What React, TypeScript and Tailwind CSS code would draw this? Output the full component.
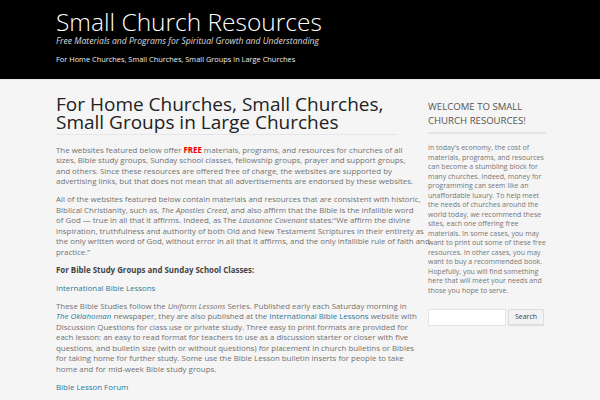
const link = 'text-[#2b7a9b]';

export default function App() {
  return (
    <div className="w-[600px] h-[400px] overflow-hidden bg-[#f5f5f5] font-['Open_Sans',sans-serif]">
      {/* Header */}
      <header className="h-[80px] bg-black border-b border-[#e8e8e8] pl-[56px] pt-[8px]">
        <h1 className="text-[24.5px] leading-[28px] font-light text-white">Small Church Resources</h1>
        <p className="text-[8.6px] leading-[10px] italic text-[#ddd]">
          Free Materials and Programs for Spiritual Growth and Understanding
        </p>
        <p className="mt-[8px] text-[7.4px] leading-[10px] text-[#eee]">
          For Home Churches, Small Churches, Small Groups in Large Churches
        </p>
      </header>

      <div className="flex gap-[30px] pl-[56px] pt-[15px]">
        {/* Main column */}
        <main className="w-[342px] shrink-0 text-[7.9px] leading-[10.5px] text-[#727272] whitespace-nowrap">
          <h2 className="text-[19px] leading-[18px] text-[#222] pb-[3px] border-b border-[#e6e6e6] whitespace-normal">
            For Home Churches, Small Churches, Small Groups in Large Churches
          </h2>
          <p className="mt-[9.5px]">
            The websites featured below offer <strong className="text-[#e00]">FREE</strong> materials, programs, and resources for churches of all
            <br />
            sizes, Bible study groups, Sunday school classes, fellowship groups, prayer and support groups,
            <br />
            and others. Since these resources are offered free of charge, the websites are supported by
            <br />
            advertising links, but that does not mean that all advertisements are endorsed by these websites.
          </p>
          <p className="mt-[7.5px]">
            All of the websites featured below contain materials and resources that are consistent with historic,
            <br />
            Biblical Christianity, such as, <em>The Apostles Creed</em>, and also affirm that the Bible is the infallible word
            <br />
            of God — true in all that it affirms. Indeed, as The <em>Lausanne Covenant</em> states:“We affirm the divine
            <br />
            inspiration, truthfulness and authority of both Old and New Testament Scriptures in their entirety as
            <br />
            the only written word of God, without error in all that it affirms, and the only infallible rule of faith and
            <br />
            practice.”
          </p>
          <p className="mt-[7.5px] font-bold text-[#444]">For Bible Study Groups and Sunday School Classes:</p>
          <p className="mt-[7.5px]">
            <a className={link}>International Bible Lessons</a>
          </p>
          <p className="mt-[7.5px]">
            These Bible Studies follow the <em>Uniform Lessons</em> Series. Published early each Saturday morning in
            <br />
            <em className={link}>The Oklahoman</em> newspaper, they are also published at the{' '}
            <a className={link}>International Bible Lessons</a> website with
            <br />
            Discussion Questions for class use or private study. Three easy to print formats are provided for
            <br />
            each lesson: an easy to read format for teachers to use as a discussion starter or closer with five
            <br />
            questions, and bulletin size (with or without questions) for placement in church bulletins or Bibles
            <br />
            for taking home for further study. Some use the Bible Lesson bulletin inserts for people to take
            <br />
            home and for mid-week Bible study groups.
          </p>
          <p className="mt-[7.5px]">
            <a className={link}>Bible Lesson Forum</a>
          </p>
        </main>

        {/* Sidebar */}
        <aside className="w-[118px] shrink-0 pt-[5px]">
          <h3 className="text-[9.6px] leading-[13.5px] uppercase text-[#555] pb-[5px] border-b-2 border-[#e4e4e4]">
            Welcome to Small Church Resources!
          </h3>
          <p className="mt-[9px] text-[7px] leading-[9.5px] text-[#777] whitespace-nowrap">
            In today's economy, the cost of
            <br />
            materials, programs, and resources
            <br />
            can become a stumbling block for
            <br />
            many churches. Indeed, money for
            <br />
            programming can seem like an
            <br />
            unaffordable luxury. To help meet
            <br />
            the needs of churches around the
            <br />
            world today, we recommend these
            <br />
            sites, each one offering free
            <br />
            materials. In some cases, you may
            <br />
            want to print out some of these free
            <br />
            resources. In other cases, you may
            <br />
            want to buy a recommended book.
            <br />
            Hopefully, you will find something
            <br />
            here that will meet your needs and
            <br />
            those you hope to serve.
          </p>
          <div className="mt-[14px] flex gap-[2px]">
            <input className="w-[78px] h-[17px] bg-white border border-[#e4e4e4]" />
            <button className="h-[16px] w-[36px] text-[7px] text-[#444] bg-[#f2f2f2] border border-[#ddd] rounded-[1px] shadow-[0_1px_1px_rgba(0,0,0,0.1)]">
              Search
            </button>
          </div>
        </aside>
      </div>
    </div>
  );
}
